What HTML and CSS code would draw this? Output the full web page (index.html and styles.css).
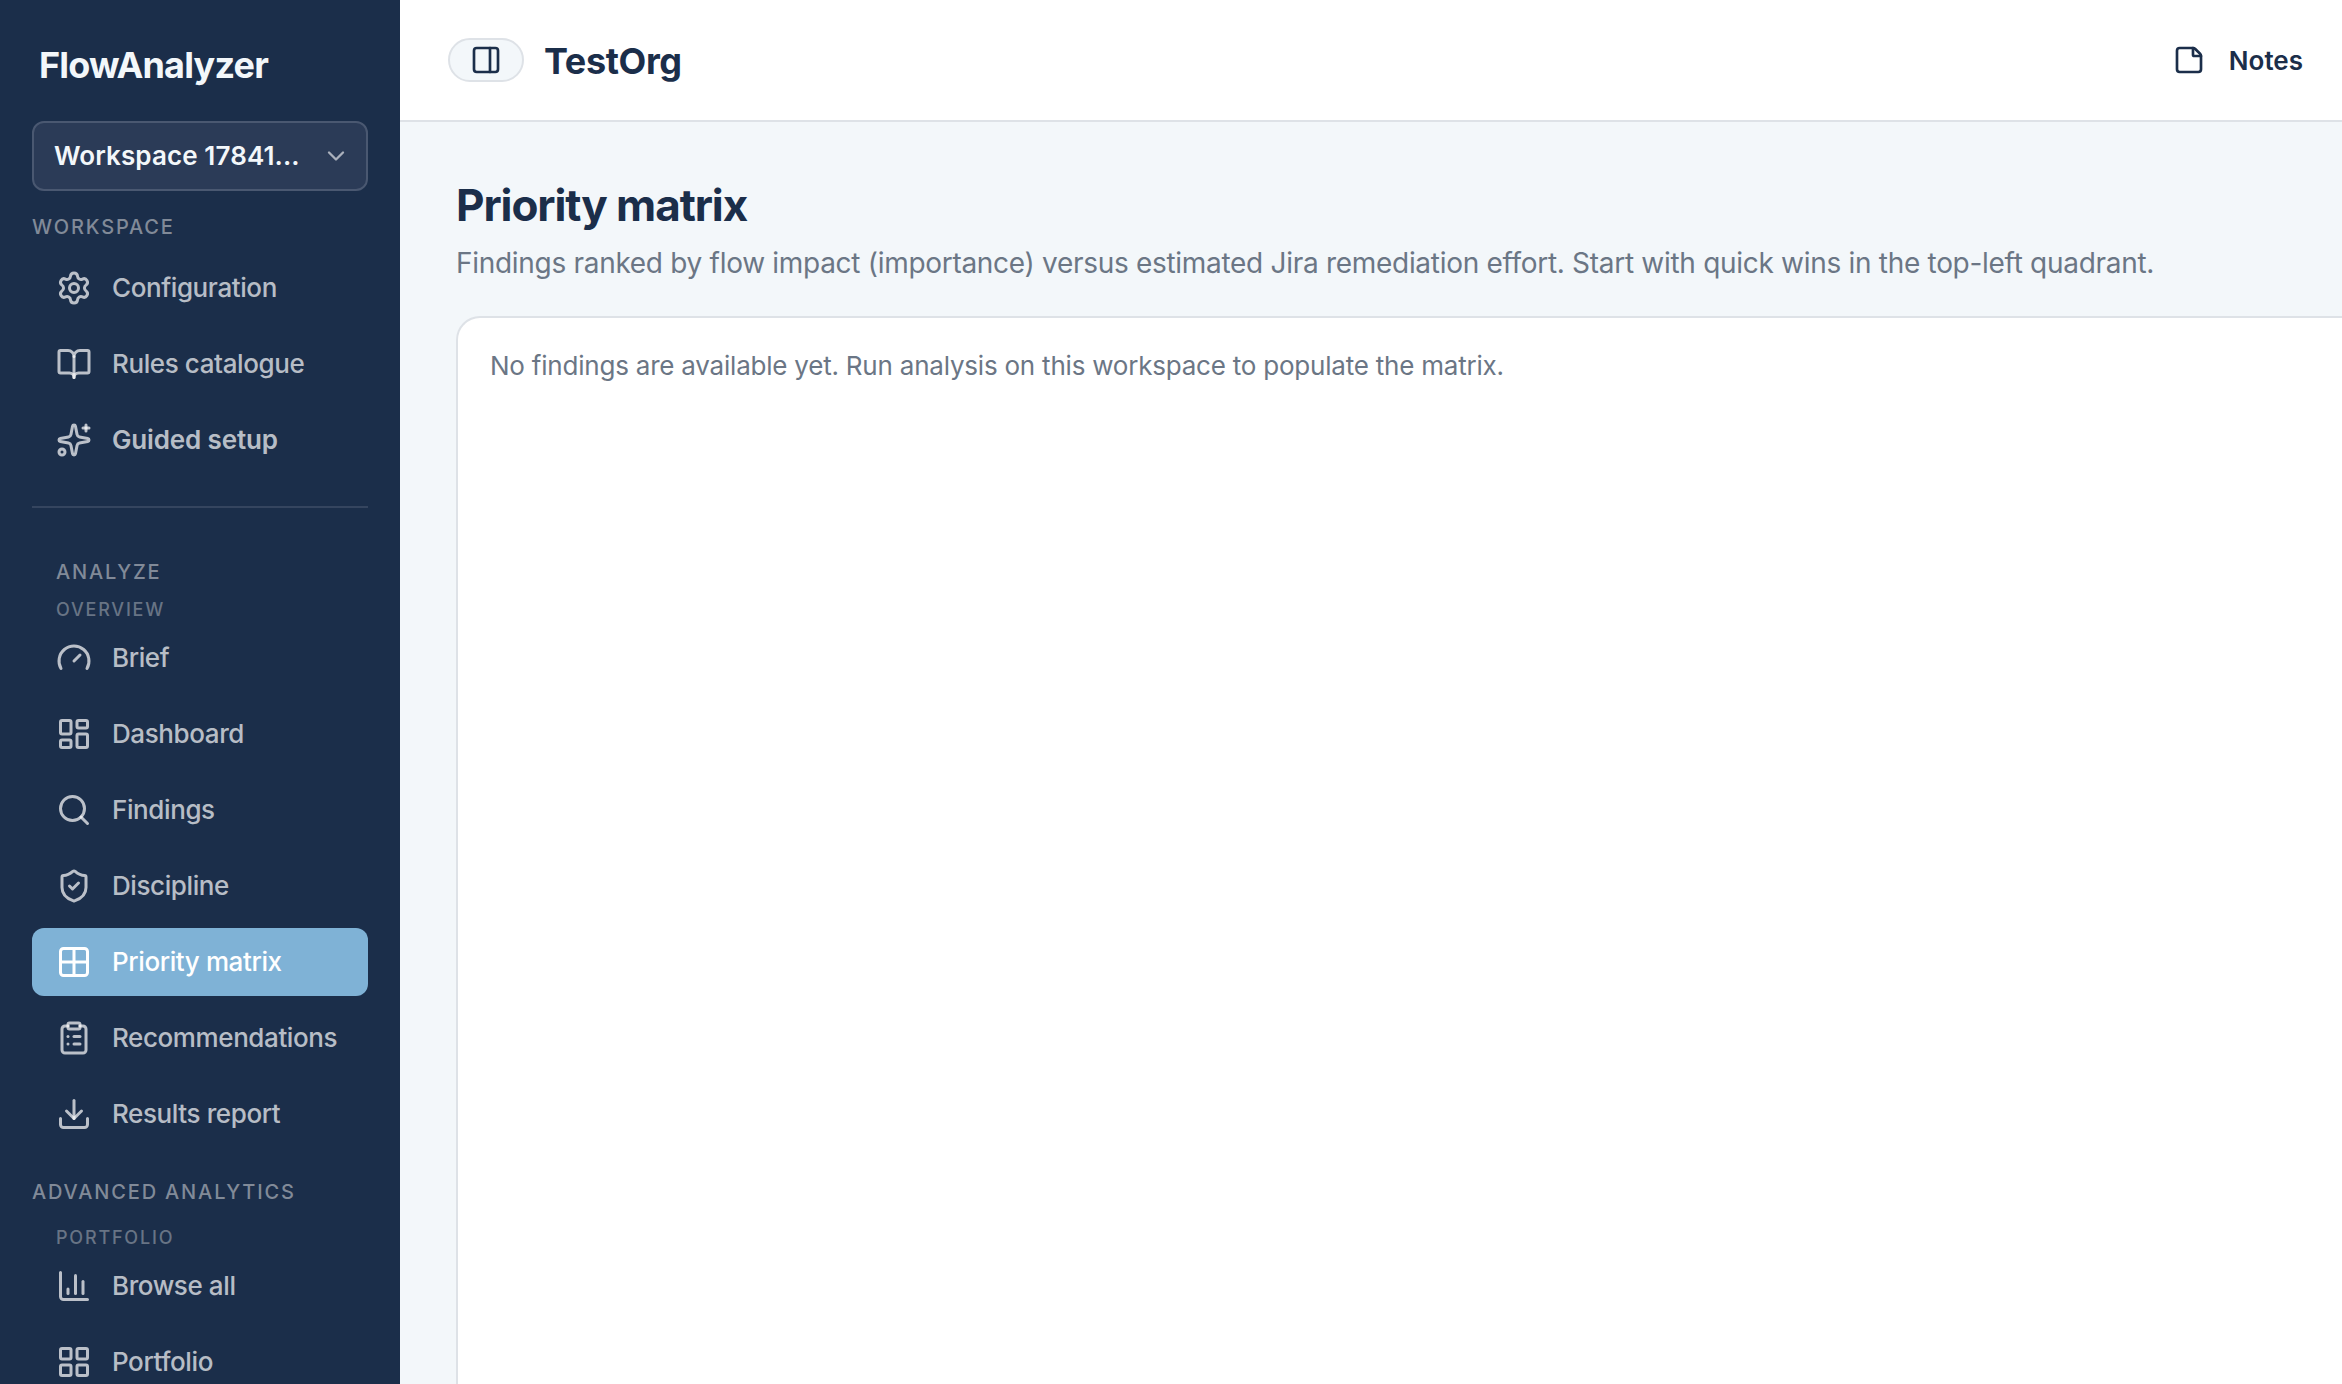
FILE: index.html
```html
<!DOCTYPE html>
<html lang="en">
<head>
<meta charset="utf-8">
<title>FlowAnalyzer</title>
<link rel="stylesheet" href="styles.css">
</head>
<body>
<div class="app">
  <aside class="sidebar">
    <div class="brand"><span>FlowAnalyzer</span></div>
    <button class="workspace-select"><span>Workspace 17841...</span>
      <svg class="chevron" viewBox="0 0 24 24"><path d="m6 9 6 6 6-6"/></svg>
    </button>
    <div class="label label-workspace"><span>WORKSPACE</span></div>
    <nav class="nav">
      <a class="item"><svg class="icon" viewBox="0 0 24 24"><path d="M9.671 4.136a2.34 2.34 0 0 1 4.659 0 2.34 2.34 0 0 0 3.319 1.915 2.34 2.34 0 0 1 2.33 4.033 2.34 2.34 0 0 0 0 3.831 2.34 2.34 0 0 1-2.33 4.033 2.34 2.34 0 0 0-3.319 1.915 2.34 2.34 0 0 1-4.659 0 2.34 2.34 0 0 0-3.32-1.915 2.34 2.34 0 0 1-2.33-4.033 2.34 2.34 0 0 0 0-3.831A2.34 2.34 0 0 1 6.35 6.051a2.34 2.34 0 0 0 3.319-1.915"/><circle cx="12" cy="12" r="3"/></svg><span>Configuration</span></a>
      <a class="item"><svg class="icon" viewBox="0 0 24 24"><path d="M12 7v14"/><path d="M3 18a1 1 0 0 1-1-1V4a1 1 0 0 1 1-1h5a4 4 0 0 1 4 4 4 4 0 0 1 4-4h5a1 1 0 0 1 1 1v13a1 1 0 0 1-1 1h-6a3 3 0 0 0-3 3 3 3 0 0 0-3-3z"/></svg><span>Rules catalogue</span></a>
      <a class="item item-strong"><svg class="icon" viewBox="0 0 24 24"><path d="M11.017 2.814a1 1 0 0 1 1.966 0l1.051 5.558a2 2 0 0 0 1.594 1.594l5.558 1.051a1 1 0 0 1 0 1.966l-5.558 1.051a2 2 0 0 0-1.594 1.594l-1.051 5.558a1 1 0 0 1-1.966 0l-1.051-5.558a2 2 0 0 0-1.594-1.594l-5.558-1.051a1 1 0 0 1 0-1.966l5.558-1.051a2 2 0 0 0 1.594-1.594z"/><path d="M20 2v4"/><path d="M22 4h-4"/><circle cx="4" cy="20" r="2"/></svg><span>Guided setup</span></a>
    </nav>
    <hr class="divider">
    <div class="label label-analyze"><span>ANALYZE</span></div>
    <div class="sublabel label-overview"><span>OVERVIEW</span></div>
    <nav class="nav">
      <a class="item"><svg class="icon" viewBox="0 0 24 24"><path d="m12 14 4-4"/><path d="M3.34 19a10 10 0 1 1 17.32 0"/></svg><span>Brief</span></a>
      <a class="item"><svg class="icon" viewBox="0 0 24 24"><rect x="3" y="3" width="7" height="9" rx="1"/><rect x="14" y="3" width="7" height="5" rx="1"/><rect x="14" y="12" width="7" height="9" rx="1"/><rect x="3" y="16" width="7" height="5" rx="1"/></svg><span>Dashboard</span></a>
      <a class="item"><svg class="icon" viewBox="0 0 24 24"><path d="m21 21-4.34-4.34"/><circle cx="11" cy="11" r="8"/></svg><span>Findings</span></a>
      <a class="item"><svg class="icon" viewBox="0 0 24 24"><path d="M20 13c0 5-3.5 7.5-7.66 8.95a1 1 0 0 1-.67-.01C7.5 20.5 4 18 4 13V6a1 1 0 0 1 1-1c2 0 4.5-1.2 6.24-2.72a1.17 1.17 0 0 1 1.52 0C14.51 3.81 17 5 19 5a1 1 0 0 1 1 1z"/><path d="m9 12 2 2 4-4"/></svg><span>Discipline</span></a>
      <a class="item item-active"><svg class="icon" viewBox="0 0 24 24"><path d="M12 3v18"/><path d="M3 12h18"/><rect x="3" y="3" width="18" height="18" rx="2"/></svg><span>Priority matrix</span></a>
      <a class="item"><svg class="icon" viewBox="0 0 24 24"><rect x="8" y="2" width="8" height="4" rx="1"/><path d="M16 4h2a2 2 0 0 1 2 2v14a2 2 0 0 1-2 2H6a2 2 0 0 1-2-2V6a2 2 0 0 1 2-2h2"/><path d="M12 11h4"/><path d="M12 16h4"/><path d="M8 11h.01"/><path d="M8 16h.01"/></svg><span>Recommendations</span></a>
      <a class="item"><svg class="icon" viewBox="0 0 24 24"><path d="M12 15V3"/><path d="M21 15v4a2 2 0 0 1-2 2H5a2 2 0 0 1-2-2v-4"/><path d="m7 10 5 5 5-5"/></svg><span>Results report</span></a>
    </nav>
    <div class="label label-advanced"><span>ADVANCED ANALYTICS</span></div>
    <div class="sublabel label-portfolio"><span>PORTFOLIO</span></div>
    <nav class="nav">
      <a class="item"><svg class="icon" viewBox="0 0 24 24"><path d="M3 3v16a2 2 0 0 0 2 2h16"/><path d="M18 17V9"/><path d="M13 17V5"/><path d="M8 17v-3"/></svg><span>Browse all</span></a>
      <a class="item"><svg class="icon" viewBox="0 0 24 24"><rect x="3" y="3" width="7" height="7" rx="1"/><rect x="14" y="3" width="7" height="7" rx="1"/><rect x="14" y="14" width="7" height="7" rx="1"/><rect x="3" y="14" width="7" height="7" rx="1"/></svg><span>Portfolio</span></a>
    </nav>
  </aside>
  <div class="main">
    <header class="topbar">
      <button class="panel-toggle"><svg class="icon-sm" viewBox="0 0 24 24"><rect x="3" y="3" width="18" height="18" rx="2"/><path d="M15 3v18"/></svg></button>
      <span class="org">TestOrg</span>
      <a class="notes"><svg class="icon-sm" viewBox="0 0 24 24"><path d="M21 9a2.4 2.4 0 0 0-.706-1.706l-3.588-3.588A2.4 2.4 0 0 0 15 3H5a2 2 0 0 0-2 2v14a2 2 0 0 0 2 2h14a2 2 0 0 0 2-2z"/><path d="M15 3v5a1 1 0 0 0 1 1h5"/></svg><span>Notes</span></a>
    </header>
    <main class="content">
      <h1 class="title"><span>Priority matrix</span></h1>
      <p class="subtitle"><span>Findings ranked by flow impact (importance) versus estimated Jira remediation effort. Start with quick wins in the top-left quadrant.</span></p>
      <section class="card"><p class="empty"><span>No findings are available yet. Run analysis on this workspace to populate the matrix.</span></p></section>
    </main>
  </div>
</div>
</body>
</html>
```
FILE: styles.css
```css
* { box-sizing: border-box; }
body {
  margin: 0;
  font-family: Inter, "Liberation Sans", sans-serif;
  color: #1b2e4a;
  background: #f3f7fa;
}
.app { display: flex; height: 1384px; overflow: hidden; }
svg { fill: none; stroke: currentColor; stroke-width: 2; stroke-linecap: round; stroke-linejoin: round; flex: none; }

.sidebar {
  width: 400px;
  flex: none;
  padding: 41px 32px 0;
  background: #1b2e4a;
  color: rgba(255, 255, 255, .7);
  overflow: hidden;
}
.brand {
  height: 48px;
  padding-left: 7px;
  line-height: 48px;
  font-size: 36px;
  font-weight: 700;
  letter-spacing: -.8px;
  color: #f3f7fa;
}
.workspace-select {
  display: flex;
  align-items: center;
  justify-content: space-between;
  width: 336px;
  height: 70px;
  margin-top: 32px;
  padding: 0 16px 0 20px;
  border: 2px solid #4a5871;
  border-radius: 12px;
  background: #2b3b57;
  font: 600 26px/40px Inter, "Liberation Sans", sans-serif;
  letter-spacing: .1px;
  color: #f3f7fa;
}
.chevron { width: 28px; height: 28px; color: rgba(255, 255, 255, .6); }

.label, .sublabel { font-weight: 500; white-space: nowrap; }
.label { height: 24px; line-height: 24px; font-size: 20px; letter-spacing: 1.85px; color: #818a98; }
.sublabel { height: 22px; padding-left: 24px; line-height: 22px; font-size: 18px; letter-spacing: 1.8px; color: #687485; }
.label-workspace { margin: 24px 0 15px; }
.label-analyze { margin-top: 52px; padding-left: 24px; }
.label-overview { margin: 15px 0 3px; }
.label-advanced { margin-top: 32px; }
.label-portfolio { margin: 23px 0 3px; }

.nav { display: flex; flex-direction: column; gap: 8px; }
.item {
  display: flex;
  align-items: center;
  gap: 20px;
  height: 68px;
  padding: 0 24px;
  border-radius: 12px;
  font-size: 26px;
  font-weight: 500;
  letter-spacing: -.4px;
  white-space: nowrap;
}
.item span { padding-bottom: 2px; }
.item-strong { font-weight: 600; letter-spacing: -.15px; }
.item-active { background: #7fb2d6; color: #fff; }
.icon { width: 36px; height: 36px; }
.divider { height: 2px; margin: 32px 0 0; border: 0; background: #35455f; }

.main { display: flex; flex: 1; flex-direction: column; min-width: 0; }
.topbar {
  display: flex;
  align-items: center;
  flex: none;
  height: 122px;
  padding: 0 39px 0 48px;
  border-bottom: 2px solid #dee2e7;
  background: #fff;
}
.panel-toggle {
  display: flex;
  align-items: center;
  justify-content: center;
  width: 76px;
  height: 44px;
  padding: 0;
  border: 2px solid #dee2e7;
  border-radius: 22px;
  background: #f3f7fa;
  color: #1b2e4a;
}
.icon-sm { width: 32px; height: 32px; }
.org { margin-left: 20px; padding-top: 2px; font-size: 36px; font-weight: 700; letter-spacing: -.36px; }
.notes { display: flex; align-items: center; gap: 24px; margin-left: auto; font-size: 26px; font-weight: 600; }

.content { display: flex; flex: 1; flex-direction: column; padding: 55px 0 0 56px; }
.title { margin: 0; line-height: 56px; font-size: 44px; font-weight: 700; letter-spacing: -1.08px; }
.subtitle { margin: 10px 0 0; line-height: 40px; font-size: 28px; letter-spacing: -.296px; color: #6b7685; white-space: nowrap; }
.card {
  flex: 1;
  margin-top: 33px;
  padding: 28px 32px;
  border: 2px solid #dee2e7;
  border-width: 2px 0 0 2px;
  border-radius: 24px 0 0 0;
  background: #fff;
}
.empty { margin: 0; line-height: 40px; font-size: 26px; letter-spacing: -.215px; color: #6b7685; white-space: nowrap; }
```
